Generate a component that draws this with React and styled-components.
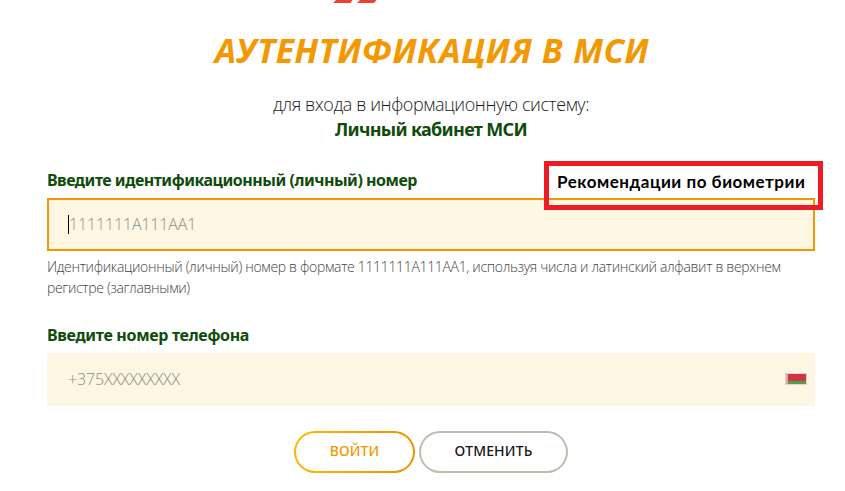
import React from 'react';
import styled, { createGlobalStyle } from 'styled-components';

const GlobalStyle = createGlobalStyle`
  * { box-sizing: border-box; }
  body {
    margin: 0;
    background: #fff;
    overflow: hidden;
    font-family: "Open Sans", "Noto Sans", sans-serif;
  }
`;

const Page = styled.main`
  width: 845px;
  height: 491px;
  padding: 0 30px 0 47px;
  overflow: hidden;
`;

const LogoRow = styled.div`
  height: 30px;
  padding-left: 285px;
`;

const LogoMark = styled.svg`
  display: block;
`;

const Title = styled.h1`
  margin: 0;
  height: 40px;
  padding-left: 2px;
  font: italic 700 34px/40px "Noto Sans", sans-serif;
  letter-spacing: 0.8px;
  text-align: center;
  color: #f39800;
  white-space: nowrap;
`;

const Intro = styled.p`
  margin: 22px 0 0;
  height: 25px;
  font-size: 18px;
  font-weight: 300;
  line-height: 25px;
  letter-spacing: -0.43px;
  text-align: center;
  color: #1a1a1a;
`;

const SystemName = styled.strong`
  display: block;
  height: 25px;
  font: 700 18px/25px "Noto Sans", sans-serif;
  letter-spacing: -0.68px;
  text-align: center;
  color: #0f4c0b;
`;

const Field = styled.section`
  position: relative;
  width: 768px;
  margin-top: ${({ $gap }) => $gap}px;
`;

const Label = styled.label`
  display: block;
  height: 26px;
  font: 700 16px/26px "Noto Sans", sans-serif;
  letter-spacing: ${({ $tracking }) => $tracking}px;
  color: #0f4c0b;
`;

const InputBox = styled.div`
  display: flex;
  align-items: center;
  height: 53px;
  margin-top: 5px;
  padding: 0 ${({ $active }) => ($active ? 19 : 21)}px 1px;
  padding-right: 8px;
  border: ${({ $active }) => ($active ? '2px solid #f39800' : '0')};
  background: #fcf6e2;
`;

const Caret = styled.span`
  width: 1px;
  height: 19px;
  background: #000;
`;

const Placeholder = styled.span`
  flex: 1;
  font-size: 16px;
  font-weight: 300;
  line-height: 22px;
  letter-spacing: -0.15px;
  color: #8c8c88;
`;

const Hint = styled.p`
  margin: 5px 0 0;
  font-size: 14px;
  font-weight: 300;
  line-height: 21px;
  letter-spacing: -0.325px;
  color: #444;
  white-space: nowrap;
`;

const Callout = styled.div`
  position: absolute;
  left: 497px;
  top: -6px;
  width: 279px;
  height: 49px;
  padding: 5px 0 0 8px;
  border: 5px solid #ed1c24;
  font: 700 17px/22px Lato, sans-serif;
  letter-spacing: 0.52px;
  white-space: nowrap;
  color: #000;
`;

const Flag = styled.svg`
  display: block;
  flex: none;
`;

const Actions = styled.div`
  display: flex;
  justify-content: center;
  gap: 4px;
  width: 768px;
  margin-top: 25px;
`;

const Button = styled.button`
  width: ${({ $width }) => $width}px;
  height: 42px;
  padding: 0 0 2px;
  border: 2px solid transparent;
  border-radius: 21px;
  background:
    linear-gradient(#fff, #fff) padding-box,
    ${({ $primary }) =>
      $primary
        ? 'linear-gradient(90deg, #fdb900, #f08f00)'
        : 'linear-gradient(#c1baae, #c1baae)'} border-box;
  font: 500 14px/20px "Noto Sans", sans-serif;
  letter-spacing: ${({ $tracking }) => $tracking}px;
  color: ${({ $primary }) => ($primary ? '#f39800' : '#161616')};
`;

export default function App() {
  return (
    <>
      <GlobalStyle />
      <Page>
        <LogoRow>
          <LogoMark width="48" height="4" viewBox="0 0 48 4">
            <path d="M4 0H20.5L18.5 3H1ZM28 0H44.5L42 3H25Z" fill="#ec4131" />
          </LogoMark>
        </LogoRow>
        <Title>АУТЕНТИФИКАЦИЯ В МСИ</Title>
        <Intro>для входа в информационную систему:</Intro>
        <SystemName>Личный кабинет МСИ</SystemName>

        <Field $gap={25}>
          <Label $tracking={-0.48}>Введите идентификационный (личный) номер</Label>
          <InputBox $active>
            <Caret />
            <Placeholder>1111111А111АА1</Placeholder>
          </InputBox>
          <Hint>
            Идентификационный (личный) номер в формате 1111111А111АА1, используя числа и латинский алфавит в верхнем
            <br />
            регистре (заглавными)
          </Hint>
          <Callout>Рекомендации по биометрии</Callout>
        </Field>

        <Field $gap={24}>
          <Label $tracking={-0.3}>Введите номер телефона</Label>
          <InputBox>
            <Placeholder>+375XXXXXXXXX</Placeholder>
            <Flag width="22" height="12" viewBox="0 0 22 12">
              <rect width="22" height="12" fill="#ded9ce" />
              <rect x="1" y="1" width="20" height="7" fill="#cf3640" />
              <rect x="1" y="8" width="20" height="3" fill="#4fa04b" />
              <rect x="1" y="1" width="2" height="10" fill="#e88b8b" />
              <path d="M1 3h2M1 6h2M1 9h2" stroke="#f2c9c5" />
            </Flag>
          </InputBox>
        </Field>

        <Actions>
          <Button $primary $width={121} $tracking={0.1}>ВОЙТИ</Button>
          <Button $width={149} $tracking={0.15}>ОТМЕНИТЬ</Button>
        </Actions>
      </Page>
    </>
  );
}
